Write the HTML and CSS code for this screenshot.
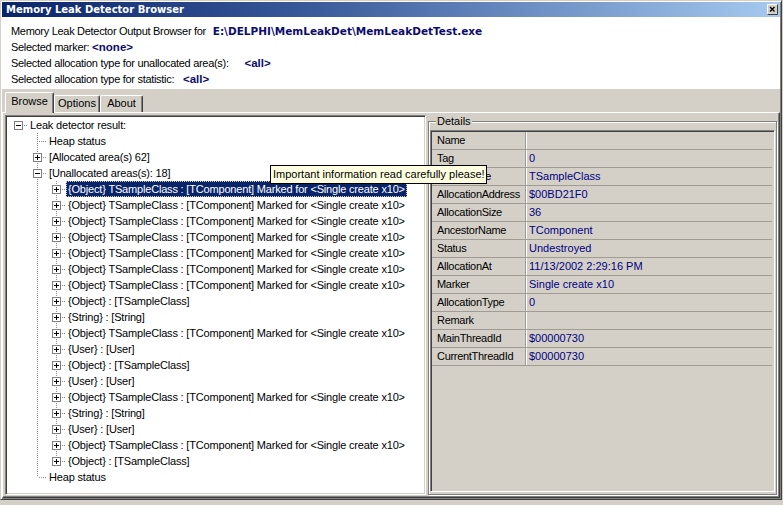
FILE: index.html
```html
<!DOCTYPE html>
<html>
<head>
<meta charset="utf-8">
<title>Memory Leak Detector Browser</title>
<link rel="stylesheet" href="styles.css">
</head>
<body>
<div class="window">
  <div class="titlebar">
    <span class="title">Memory Leak Detector Browser</span>
    <span class="close"><svg width="11" height="11" viewBox="0 0 11 11"><rect x="0" y="0" width="11" height="11" fill="#d4d0c8"/><path d="M0.5 10.5V0.5H10.5" stroke="#fff" fill="none"/><path d="M0.5 10.5H10.5V0.5" stroke="#404040" fill="none"/><path d="M3 3l4.5 4.5M7.5 3L3 7.5" stroke="#000" stroke-width="1.4"/></svg></span>
  </div>
  <div class="info">
    <div class="line">Memory Leak Detector Output Browser for <b class="path">E:\DELPHI\MemLeakDet\MemLeakDetTest.exe</b></div>
    <div class="line">Selected marker: <b class="val">&lt;none&gt;</b></div>
    <div class="line">Selected allocation type for unallocated area(s): <b class="val gap">&lt;all&gt;</b></div>
    <div class="line">Selected allocation type for statistic: <b class="val gap-sm">&lt;all&gt;</b></div>
  </div>
  <div class="tabstrip">
    <div class="tab tab-browse active">Browse</div>
    <div class="tab tab-options">Options</div>
    <div class="tab tab-about">About</div>
  </div>
  <div class="sheet">
    <div class="tree">
      <div class="row"><i class="c r"><b class="bx"></b></i><span class="t">Leak detector result:</span></div>
      <div class="row"><i class="c"></i><i class="c j"></i><span class="t">Heap status</span></div>
      <div class="row"><i class="c"></i><i class="c j"><b class="bx p"></b></i><span class="t">[Allocated area(s) 62]</span></div>
      <div class="row"><i class="c"></i><i class="c j"><b class="bx"></b></i><span class="t">[Unallocated areas(s): 18]</span></div>
      <div class="row"><i class="c"></i><i class="c v"></i><i class="c j"><b class="bx p"></b></i><span class="t sel">{Object} TSampleClass : [TComponent] Marked for &lt;Single create x10&gt;</span></div>
      <div class="row"><i class="c"></i><i class="c v"></i><i class="c j"><b class="bx p"></b></i><span class="t">{Object} TSampleClass : [TComponent] Marked for &lt;Single create x10&gt;</span></div>
      <div class="row"><i class="c"></i><i class="c v"></i><i class="c j"><b class="bx p"></b></i><span class="t">{Object} TSampleClass : [TComponent] Marked for &lt;Single create x10&gt;</span></div>
      <div class="row"><i class="c"></i><i class="c v"></i><i class="c j"><b class="bx p"></b></i><span class="t">{Object} TSampleClass : [TComponent] Marked for &lt;Single create x10&gt;</span></div>
      <div class="row"><i class="c"></i><i class="c v"></i><i class="c j"><b class="bx p"></b></i><span class="t">{Object} TSampleClass : [TComponent] Marked for &lt;Single create x10&gt;</span></div>
      <div class="row"><i class="c"></i><i class="c v"></i><i class="c j"><b class="bx p"></b></i><span class="t">{Object} TSampleClass : [TComponent] Marked for &lt;Single create x10&gt;</span></div>
      <div class="row"><i class="c"></i><i class="c v"></i><i class="c j"><b class="bx p"></b></i><span class="t">{Object} TSampleClass : [TComponent] Marked for &lt;Single create x10&gt;</span></div>
      <div class="row"><i class="c"></i><i class="c v"></i><i class="c j"><b class="bx p"></b></i><span class="t">{Object} : [TSampleClass]</span></div>
      <div class="row"><i class="c"></i><i class="c v"></i><i class="c j"><b class="bx p"></b></i><span class="t">{String} : [String]</span></div>
      <div class="row"><i class="c"></i><i class="c v"></i><i class="c j"><b class="bx p"></b></i><span class="t">{Object} TSampleClass : [TComponent] Marked for &lt;Single create x10&gt;</span></div>
      <div class="row"><i class="c"></i><i class="c v"></i><i class="c j"><b class="bx p"></b></i><span class="t">{User} : [User]</span></div>
      <div class="row"><i class="c"></i><i class="c v"></i><i class="c j"><b class="bx p"></b></i><span class="t">{Object} : [TSampleClass]</span></div>
      <div class="row"><i class="c"></i><i class="c v"></i><i class="c j"><b class="bx p"></b></i><span class="t">{User} : [User]</span></div>
      <div class="row"><i class="c"></i><i class="c v"></i><i class="c j"><b class="bx p"></b></i><span class="t">{Object} TSampleClass : [TComponent] Marked for &lt;Single create x10&gt;</span></div>
      <div class="row"><i class="c"></i><i class="c v"></i><i class="c j"><b class="bx p"></b></i><span class="t">{String} : [String]</span></div>
      <div class="row"><i class="c"></i><i class="c v"></i><i class="c j"><b class="bx p"></b></i><span class="t">{User} : [User]</span></div>
      <div class="row"><i class="c"></i><i class="c v"></i><i class="c j"><b class="bx p"></b></i><span class="t">{Object} TSampleClass : [TComponent] Marked for &lt;Single create x10&gt;</span></div>
      <div class="row"><i class="c"></i><i class="c v"></i><i class="c l"><b class="bx p"></b></i><span class="t">{Object} : [TSampleClass]</span></div>
      <div class="row"><i class="c"></i><i class="c l"></i><span class="t">Heap status</span></div>
    </div>
    <fieldset class="details">
      <legend>Details</legend>
      <div class="grid">
        <div class="grow"><span class="gn">Name</span><span class="gv"></span></div>
        <div class="grow"><span class="gn">Tag</span><span class="gv">0</span></div>
        <div class="grow"><span class="gn">ClassName</span><span class="gv">TSampleClass</span></div>
        <div class="grow"><span class="gn">AllocationAddress</span><span class="gv">$00BD21F0</span></div>
        <div class="grow"><span class="gn">AllocationSize</span><span class="gv">36</span></div>
        <div class="grow"><span class="gn">AncestorName</span><span class="gv">TComponent</span></div>
        <div class="grow"><span class="gn">Status</span><span class="gv">Undestroyed</span></div>
        <div class="grow"><span class="gn">AllocationAt</span><span class="gv">11/13/2002 2:29:16 PM</span></div>
        <div class="grow"><span class="gn">Marker</span><span class="gv">Single create x10</span></div>
        <div class="grow"><span class="gn">AllocationType</span><span class="gv">0</span></div>
        <div class="grow"><span class="gn">Remark</span><span class="gv"></span></div>
        <div class="grow"><span class="gn">MainThreadId</span><span class="gv">$00000730</span></div>
        <div class="grow"><span class="gn">CurrentThreadId</span><span class="gv">$00000730</span></div>
      </div>
    </fieldset>
  </div>
</div>
<div class="tooltip">Important information read carefully please!</div>
</body>
</html>
```
FILE: styles.css
```css
* { box-sizing: border-box; }
html, body { margin: 0; padding: 0; }
body {
  width: 783px;
  height: 505px;
  overflow: hidden;
  background: #d4d0c8;
  font-family: "Liberation Sans", Arial, sans-serif;
  font-size: 11px;
  color: #000;
  position: relative;
}
.window {
  width: 782px;
  height: 500px;
  border: 1px solid;
  border-color: #d4d0c8 #404040 #404040 #d4d0c8;
  box-shadow: inset 1px 1px #fff, inset -1px -1px #808080;
  padding: 1px;
  display: flex;
  flex-direction: column;
  background: #d4d0c8;
}
.titlebar {
  height: 15px;
  flex: none;
  display: flex;
  align-items: center;
  justify-content: space-between;
  padding: 0 2px 0 4px;
  background: linear-gradient(to right, #0a246a 0%, #3a5a9a 40%, #a6caf0 100%);
}
.title {
  font-family: "DejaVu Sans", sans-serif;
  font-weight: bold;
  font-size: 10px;
  color: #fff;
  white-space: nowrap;
}
.close { display: flex; }
.info {
  height: 72px;
  flex: none;
  background: #fff;
  padding: 6px 0 2px 9px;
}
.line {
  height: 16px;
  line-height: 16px;
  letter-spacing: -0.3px;
  white-space: nowrap;
}
.path {
  font-family: "DejaVu Sans", sans-serif;
  font-size: 10.5px;
  letter-spacing: 0;
  color: #0c0c6e;
  margin-left: 4px;
}
.val {
  font-family: "Liberation Sans", Arial, sans-serif;
  font-size: 11.5px;
  letter-spacing: 0;
  color: #0c0c6e;
}
.gap { margin-left: 13px; }
.gap-sm { margin-left: 6px; }
.tabstrip {
  height: 23px;
  flex: none;
  display: flex;
  align-items: flex-end;
  padding-left: 3px;
  position: relative;
  z-index: 1;
}
.tab {
  height: 17px;
  line-height: 15px;
  text-align: center;
  background: #d4d0c8;
  border-top: 1px solid #fff;
  border-left: 1px solid #fff;
  border-right: 1px solid #404040;
  box-shadow: inset -1px 0 #808080;
  border-radius: 2px 2px 0 0;
}
.tab.active {
  height: 21px;
  margin-bottom: -1px;
  line-height: 16px;
}
.tab-browse { width: 49px; }
.tab-options { width: 46px; }
.tab-about { width: 43px; }
.sheet {
  flex: 1;
  display: flex;
  gap: 2px;
  border-top: 1px solid #fff;
  border-left: 1px solid #fff;
  border-right: 1px solid #404040;
  border-bottom: 1px solid #404040;
  box-shadow: inset -1px -1px #808080;
  padding: 2px 2px 2px 2px;
}
.tree {
  width: 421px;
  flex: none;
  background: #fff;
  border: 1px solid;
  border-color: #808080 #fff #fff #808080;
  box-shadow: inset 1px 1px #404040, inset -1px -1px #d4d0c8;
  padding: 1px 0 0 3px;
  overflow: hidden;
  letter-spacing: -0.18px;
}
.row {
  display: flex;
  height: 16px;
  line-height: 16px;
  white-space: nowrap;
}
.c {
  width: 19px;
  height: 16px;
  flex: none;
  position: relative;
}
.v::before, .j::before, .l::before {
  content: "";
  position: absolute;
  left: 9px;
  top: 0;
  width: 1px;
  height: 16px;
  background: repeating-linear-gradient(to bottom, #8a8a8a 0 1px, transparent 1px 2px);
}
.l::before { height: 8px; }
.j::after, .l::after, .r::after {
  content: "";
  position: absolute;
  left: 10px;
  top: 8px;
  width: 9px;
  height: 1px;
  background: repeating-linear-gradient(to right, transparent 0 1px, #8a8a8a 1px 2px);
}
.bx {
  position: absolute;
  left: 5px;
  top: 4px;
  width: 9px;
  height: 9px;
  border: 1px solid #808080;
  background: #fff;
  z-index: 1;
}
.bx::before {
  content: "";
  position: absolute;
  left: 1px;
  top: 3px;
  width: 5px;
  height: 1px;
  background: #000;
}
.bx.p::after {
  content: "";
  position: absolute;
  left: 3px;
  top: 1px;
  width: 1px;
  height: 5px;
  background: #000;
}
.t {
  padding: 0 2px;
  height: 16px;
}
.t.sel {
  background: #0a246a;
  color: #fff;
  outline: 1px dotted #d8d0a0;
  outline-offset: -1px;
}
.details {
  flex: 1;
  margin: 0;
  min-width: 0;
  padding: 2px 1px 0 1px;
  border: 1px solid #808080;
  box-shadow: inset 1px 1px #fff, 1px 1px #fff;
}
.details legend {
  margin-left: 6px;
  padding: 0 1px;
  line-height: 13px;
  background: #d4d0c8;
}
.grid {
  height: 362px;
  background: #d4d0c8;
  border: 1px solid;
  border-color: #808080 #fff #fff #808080;
  box-shadow: inset 1px 1px #404040, inset -1px -1px #d4d0c8;
  padding: 1px 0 0 1px;
}
.grow {
  display: flex;
  width: 340px;
  height: 18px;
  border-bottom: 1px solid #a09c94;
  line-height: 17px;
}
.gn {
  width: 94px;
  flex: none;
  padding-left: 5px;
  border-right: 1px solid #a09c94;
  letter-spacing: -0.3px;
  white-space: nowrap;
  overflow: hidden;
}
.gv {
  flex: 1;
  padding-left: 3px;
  color: #000080;
  box-shadow: inset 1px 0 #fff;
  white-space: nowrap;
}
.tooltip {
  position: absolute;
  left: 270px;
  top: 165px;
  width: 217px;
  height: 19px;
  background: #ffffe1;
  border: 1px solid #000;
  padding-left: 2px;
  line-height: 17px;
  white-space: nowrap;
  z-index: 5;
}
```
